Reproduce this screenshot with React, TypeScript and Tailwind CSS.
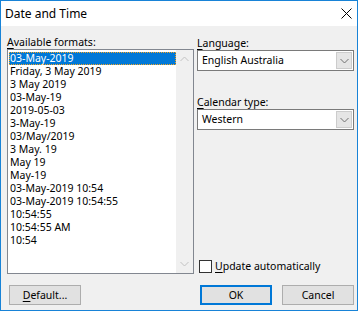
import React from 'react';

const formats = [
  '03-May-2019',
  'Friday, 3 May 2019',
  '3 May 2019',
  '03-May-19',
  '2019-05-03',
  '3-May-19',
  '03/May/2019',
  '3 May. 19',
  'May 19',
  'May-19',
  '03-May-2019 10:54',
  '03-May-2019 10:54:55',
  '10:54:55',
  '10:54:55 AM',
  '10:54',
];

const Chevron = ({ up = false, color = '#606060' }: { up?: boolean; color?: string }) => (
  <svg width="9" height="6" viewBox="0 0 9 6">
    <polyline
      points={up ? '0.5,5 4.5,1 8.5,5' : '0.5,1 4.5,5 8.5,1'}
      fill="none"
      stroke={color}
      strokeWidth="1"
    />
  </svg>
);

const Dropdown = ({ value }: { value: string }) => (
  <div className="flex h-[21px] w-full items-stretch border border-[#7a7a7a] bg-white">
    <div className="flex flex-1 items-center pl-[4px] text-black">{value}</div>
    <div className="m-[1px] flex w-[16px] items-center justify-center border border-[#cccccc] bg-[#e5e5e5]">
      <Chevron color="#707070" />
    </div>
  </div>
);

const Button = ({ children, focused = false }: { children: React.ReactNode; focused?: boolean }) => (
  <button
    className={
      focused
        ? 'flex h-[20px] w-[72px] items-center justify-center border-2 border-[#0078d7] bg-[#e1e1e1] text-black'
        : 'flex h-[20px] w-[72px] items-center justify-center border border-[#adadad] bg-[#e1e1e1] text-black'
    }
  >
    {children}
  </button>
);

export default function App() {
  return (
    <div
      className="h-[311px] w-[362px] overflow-hidden bg-white text-[10.5px] leading-[13px] text-black"
      style={{ fontFamily: '"Noto Sans", "Liberation Sans", sans-serif' }}
    >
      <div className="flex h-[311px] w-[358px] flex-col border border-[#1883d7] bg-[#f0f0f0]">
        {/* title bar */}
        <div className="flex h-[25px] items-center justify-between bg-white pl-[4px] pr-[5px]">
          <span className="text-[12px]">Date and Time</span>
          <svg width="11" height="11" viewBox="0 0 11 11">
            <line x1="0.5" y1="0.5" x2="10.5" y2="10.5" stroke="#000" strokeWidth="1" />
            <line x1="10.5" y1="0.5" x2="0.5" y2="10.5" stroke="#000" strokeWidth="1" />
          </svg>
        </div>

        <div className="flex flex-1 flex-col pl-[6px] pr-[3px] pt-[9px]">
          <div className="flex gap-[3px]">
            {/* formats list */}
            <div className="flex w-[187px] flex-col">
              <div className="h-[14px] leading-[14px]">
                <span className="underline underline-offset-2">A</span>vailable formats:
              </div>
              <div className="flex h-[225px] border border-[#828790] bg-white">
                <div className="flex-1 pl-[1px] pt-[2px]">
                  {formats.map((f, i) =>
                    i === 0 ? (
                      <div
                        key={f}
                        className="h-[13px] bg-[#0078d7] pl-[1px] text-white outline-1 -outline-offset-1 outline-dotted outline-[#f5a623]"
                      >
                        {f}
                      </div>
                    ) : (
                      <div key={f} className="h-[13px] pl-[1px]">
                        {f}
                      </div>
                    )
                  )}
                </div>
                <div className="flex w-[17px] flex-col items-center justify-between bg-[#f0f0f0] py-[6px]">
                  <Chevron up color="#c2c2c2" />
                  <Chevron color="#c2c2c2" />
                </div>
              </div>
            </div>

            {/* right column */}
            <div className="flex w-[157px] flex-col pt-[1px]">
              <div className="h-[14px] leading-[14px]">
                <span className="underline underline-offset-2">L</span>anguage:
              </div>
              <Dropdown value="English Australia" />
              <div className="mt-[24px] h-[14px] leading-[14px]">
                <span className="underline underline-offset-2">C</span>alendar type:
              </div>
              <Dropdown value="Western" />
              <div className="mb-[1px] mt-auto flex items-center gap-[3px] pl-[2px]">
                <div className="h-[13px] w-[13px] border border-[#333333] bg-white" />
                <span>
                  <span className="underline underline-offset-2">U</span>pdate automatically
                </span>
              </div>
            </div>
          </div>

          {/* buttons */}
          <div className="mt-[11px] flex items-center justify-between pl-[2px]">
            <Button>
              <span>
                <span className="underline underline-offset-2">D</span>efault...
              </span>
            </Button>
            <div className="flex gap-[10px]">
              <Button focused>OK</Button>
              <Button>Cancel</Button>
            </div>
          </div>
        </div>
      </div>
    </div>
  );
}
